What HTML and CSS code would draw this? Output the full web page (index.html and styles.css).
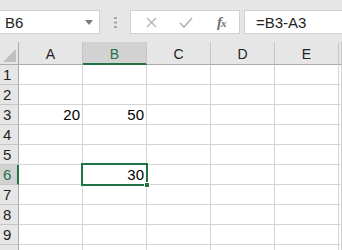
FILE: index.html
```html
<!DOCTYPE html>
<html lang="en">
<head>
  <meta charset="UTF-8">
  <title>Sheet</title>
  <link rel="stylesheet" href="styles.css">
</head>
<body>

<div class="toolbar">
  <div class="name-box">
    <span>B6</span>
    <svg class="drop" width="8" height="5" viewBox="0 0 8 5"><path d="M0 0H8L4 5Z" fill="#7a7a7a"/></svg>
  </div>
  <div class="grip">
    <svg width="3" height="11" viewBox="0 0 3 11"><rect x="0" y="0" width="3" height="2" fill="#a6a6a6"/><rect x="0" y="4.5" width="3" height="2" fill="#a6a6a6"/><rect x="0" y="9" width="3" height="2" fill="#a6a6a6"/></svg>
  </div>
  <div class="fx-buttons">
    <svg class="btn" width="11" height="11" viewBox="0 0 11 11"><path d="M1 1L10 10M10 1L1 10" stroke="#b4b4b4" stroke-width="1.4"/></svg>
    <svg class="btn" width="14" height="11" viewBox="0 0 14 11"><path d="M1 6L5 10L13 1" stroke="#b4b4b4" stroke-width="1.7" fill="none"/></svg>
    <span class="fx">f<small>x</small></span>
  </div>
  <div class="formula">=B3-A3</div>
</div>

<div class="sheet">
  <div class="corner"><svg width="13" height="13" viewBox="0 0 13 13"><path d="M13 0V13H0Z" fill="#c0c0c0"/></svg></div>
  <div class="col-head">A</div>
  <div class="col-head active">B</div>
  <div class="col-head">C</div>
  <div class="col-head">D</div>
  <div class="col-head">E</div>
  <div class="col-head"></div>

  <div class="row-head">1</div><div class="cell"></div><div class="cell"></div><div class="cell"></div><div class="cell"></div><div class="cell"></div><div class="cell"></div>
  <div class="row-head">2</div><div class="cell"></div><div class="cell"></div><div class="cell"></div><div class="cell"></div><div class="cell"></div><div class="cell"></div>
  <div class="row-head">3</div><div class="cell">20</div><div class="cell">50</div><div class="cell"></div><div class="cell"></div><div class="cell"></div><div class="cell"></div>
  <div class="row-head">4</div><div class="cell"></div><div class="cell"></div><div class="cell"></div><div class="cell"></div><div class="cell"></div><div class="cell"></div>
  <div class="row-head">5</div><div class="cell"></div><div class="cell"></div><div class="cell"></div><div class="cell"></div><div class="cell"></div><div class="cell"></div>
  <div class="row-head active">6</div><div class="cell"></div><div class="cell selected">30<span class="sel-box"><span class="handle"></span></span></div><div class="cell"></div><div class="cell"></div><div class="cell"></div><div class="cell"></div>
  <div class="row-head">7</div><div class="cell"></div><div class="cell"></div><div class="cell"></div><div class="cell"></div><div class="cell"></div><div class="cell"></div>
  <div class="row-head">8</div><div class="cell"></div><div class="cell"></div><div class="cell"></div><div class="cell"></div><div class="cell"></div><div class="cell"></div>
  <div class="row-head">9</div><div class="cell"></div><div class="cell"></div><div class="cell"></div><div class="cell"></div><div class="cell"></div><div class="cell"></div>
  <div class="row-head"></div><div class="cell"></div><div class="cell"></div><div class="cell"></div><div class="cell"></div><div class="cell"></div><div class="cell"></div>
</div>

</body>
</html>
```

FILE: styles.css
```css
body {
  margin: 0;
  width: 342px;
  height: 250px;
  overflow: hidden;
  background-color: #fff;
  font-family: "Liberation Sans", Arial, sans-serif;
  color: #000;
}

.toolbar {
  display: flex;
  height: 42px;
  padding-top: 10px;
  box-sizing: border-box;
  background-color: #e6e6e6;
}

.name-box,
.fx-buttons,
.formula {
  height: 24px;
  box-sizing: border-box;
  background-color: #fff;
  border: 1px solid #d0d0d0;
  display: flex;
  align-items: center;
}

.name-box {
  width: 100px;
  border-left: none;
  padding-left: 5px;
  justify-content: space-between;
  font-size: 15px;
  color: #222;
}

.name-box .drop {
  margin-right: 6px;
}

.grip {
  width: 30px;
  display: flex;
  align-items: center;
  justify-content: center;
  height: 24px;
}

.fx-buttons {
  width: 110px;
  padding-left: 15px;
}

.fx-buttons .btn {
  margin-right: 22px;
}

.fx-buttons .btn + .btn {
  margin-right: 24px;
}

.fx {
  font-family: "Liberation Serif", "Times New Roman", serif;
  font-style: italic;
  font-weight: bold;
  font-size: 15px;
  color: #707070;
  letter-spacing: -1px;
}

.fx small {
  font-size: 11px;
}

.formula {
  flex: 1;
  margin-left: 4px;
  border-right: none;
  padding-left: 11px;
  font-size: 15px;
  color: #222;
}

.sheet {
  display: grid;
  grid-template-columns: 19px repeat(5, 64px) 1fr;
  grid-template-rows: 23px;
  grid-auto-rows: 20px;
}

.corner,
.col-head,
.row-head {
  background-color: #e6e6e6;
  box-sizing: border-box;
  font-family: "Liberation Sans", Arial, sans-serif;
  font-size: 14px;
  color: #222;
}

.corner {
  border-right: 1px solid #ababab;
  border-bottom: 1px solid #ababab;
  display: flex;
  align-items: flex-end;
  justify-content: flex-end;
  padding: 0 2px 2px 0;
}

.col-head {
  border-right: 1px solid #c6c6c6;
  border-bottom: 1px solid #ababab;
  display: flex;
  align-items: center;
  justify-content: center;
  padding-top: 2px;
}

.col-head.active {
  background-color: #d2d2d2;
  border-bottom: 2px solid #217346;
  color: #217346;
}

.row-head {
  border-right: 1px solid #ababab;
  border-bottom: 1px solid #c6c6c6;
  display: flex;
  align-items: center;
  padding-left: 3px;
  font-size: 15px;
  overflow: hidden;
}

.row-head.active {
  background-color: #d2d2d2;
  border-right: 2px solid #217346;
  color: #217346;
}

.cell {
  box-sizing: border-box;
  border-right: 1px solid #d4d4d4;
  border-bottom: 1px solid #d4d4d4;
  text-align: right;
  padding-right: 2px;
  font-size: 15px;
  line-height: 20px;
  color: #000;
}

.selected {
  position: relative;
}

.sel-box {
  position: absolute;
  left: -2px;
  top: -2px;
  width: 67px;
  height: 23px;
  box-sizing: border-box;
  border: 2px solid #217346;
}

.handle {
  position: absolute;
  right: -4px;
  bottom: -4px;
  width: 6px;
  height: 6px;
  box-sizing: border-box;
  background-color: #217346;
  border: 1px solid #fff;
}
```
